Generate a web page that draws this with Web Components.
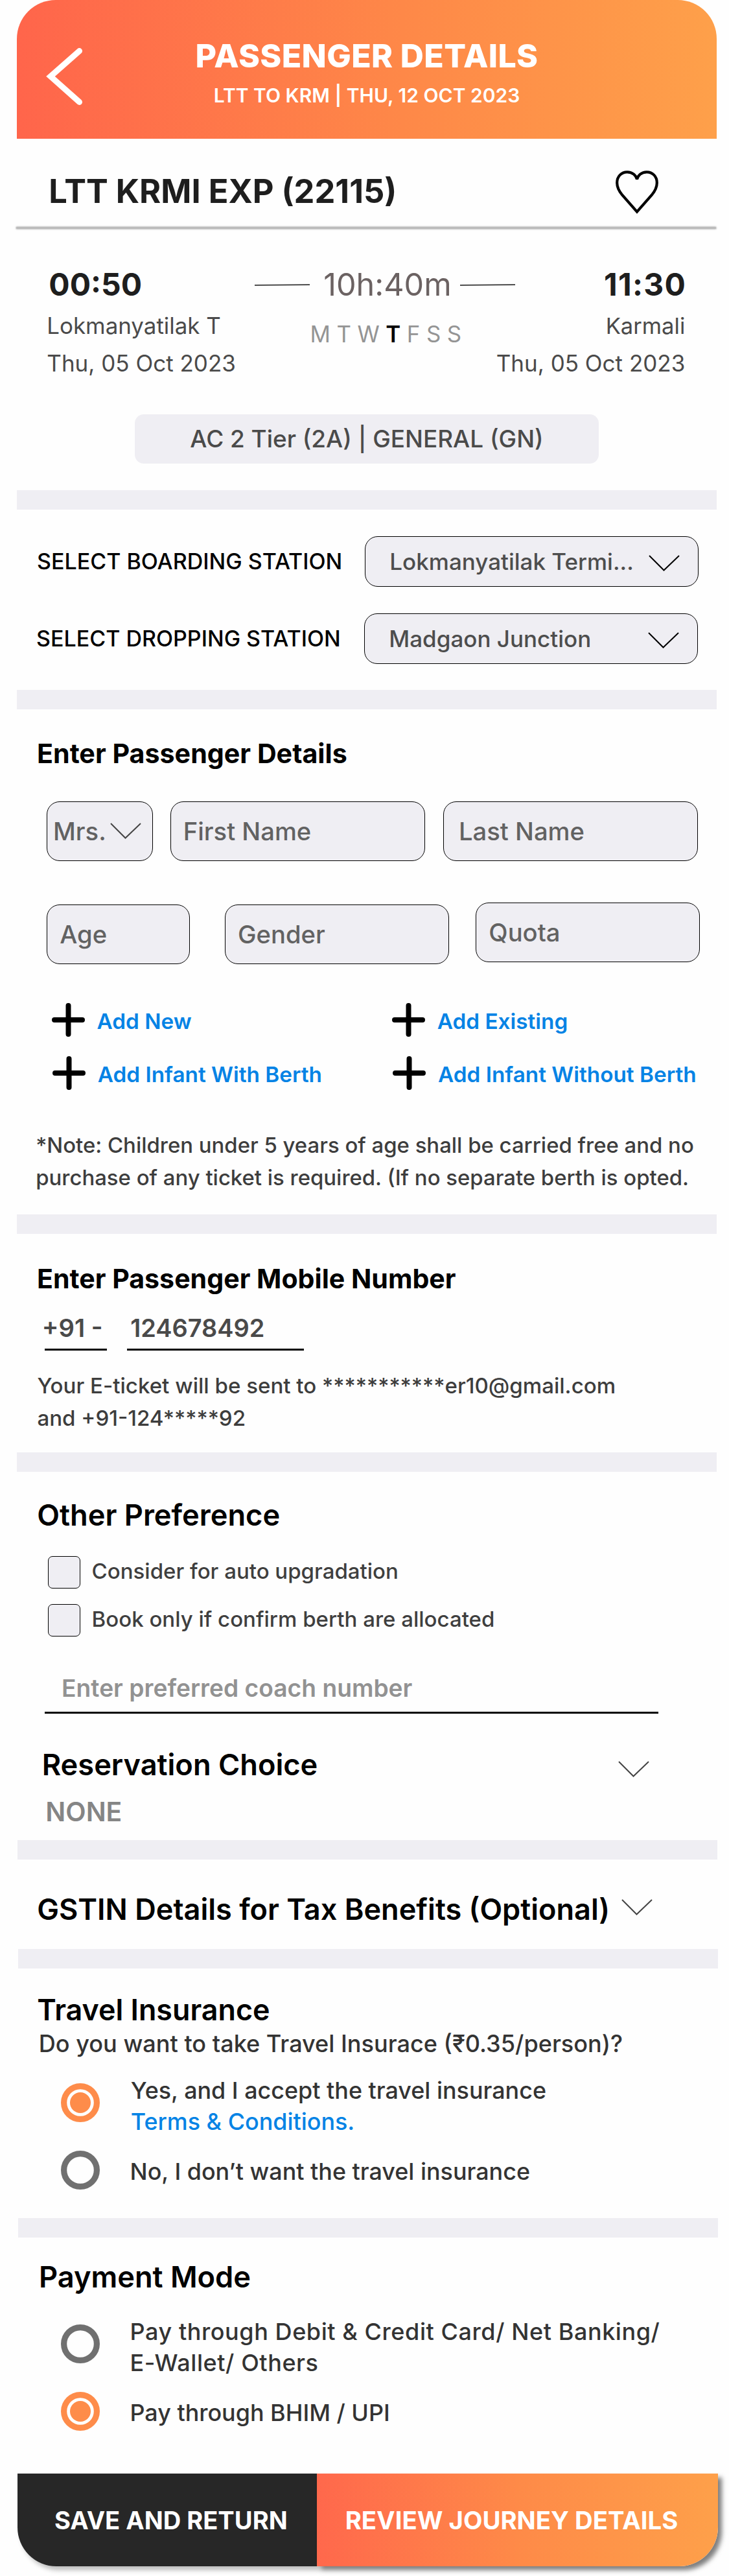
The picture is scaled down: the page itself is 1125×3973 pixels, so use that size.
<!DOCTYPE html>
<html lang="en">
<head>
<meta charset="utf-8">
<title>Passenger Details</title>
<style>
body{margin:0;background:#fefefe;font-family:Inter,"Liberation Sans",sans-serif}
</style>
</head>
<body>
<passenger-page></passenger-page>
<script>
const define = (name, html, setup) => {
  const tpl = document.createElement('template');
  tpl.innerHTML = html;
  customElements.define(name, class extends HTMLElement {
    connectedCallback() {
      if (this.shadowRoot) return;
      this.attachShadow({ mode: 'open' }).append(tpl.content.cloneNode(true));
      if (setup) setup(this, this.shadowRoot);
    }
  });
};

/* Text line: size, weight and tracking come from attributes */
define('text-line', `<style>
  :host{display:block;white-space:nowrap;font-size:var(--s);font-weight:var(--w);letter-spacing:var(--t,0)}
</style><slot></slot>`, (el) => {
  el.style.setProperty('--s', el.getAttribute('size') + 'px');
  el.style.setProperty('--w', el.getAttribute('weight') || 500);
  el.style.setProperty('--t', (el.getAttribute('track') || 0) + 'px');
  el.style.lineHeight = (el.getAttribute('line') || 60) + 'px';
});

define('chevron-icon', `<style>:host{display:block;flex:none;width:48px;height:26px}svg{display:block}</style>
<svg width="48" height="26" viewBox="0 0 48 26" fill="none"><path d="M1 1 23.5 23.5 47 1" stroke="currentColor" stroke-width="2"/></svg>`);

define('app-header', `<style>
  :host{display:grid;grid-template-columns:140px 1fr 140px;width:1080px;height:214px;margin-left:26px;
    border-radius:60px 60px 0 0;background:linear-gradient(90deg,#ff654b,#fe8848 55%,#fea04a);color:#fff;text-align:center}
  svg{margin:74px 0 0 45px}
  .t{padding-top:56px}
  .s{margin-top:11px}
</style>
<svg width="57" height="88" viewBox="0 0 57 88" fill="none"><path d="M51.5 4.6 7 43.8 51.5 83.4" stroke="#fff" stroke-width="9" stroke-linecap="round"/></svg>
<div class="t"><text-line size="50" weight="800" track="0.37"><slot></slot></text-line>
<text-line class="s" size="30" weight="600" line="40"><slot name="sub"></slot></text-line></div>`);

define('page-section', `<style>
  :host{display:block;box-sizing:border-box;height:var(--h)}
  .band{height:30px;width:1080px;margin-left:var(--x,26px);background:#efeef3}
</style><div class="band"></div><slot></slot>`);

define('train-summary', `<style>
  :host{display:block;height:542px}
  .head{display:flex;justify-content:space-between;height:136px;padding:0 109px 0 75.2px;box-sizing:border-box;color:#1e1e1e}
  .head text-line{margin-top:50.6px}
  .head svg{margin-top:49px}
  .rule{height:3px;width:1080px;margin-left:25px;border-radius:2px;background:#bbb;box-shadow:0 0 2px 1px #c8c8c8}
  .trip{display:grid;grid-template-columns:321px 402px 262px;margin:56px 0 0 72.3px;color:#4a4a4a}
  .time{color:#1e1e1e}
  .left .time{margin-left:3px}
  .right{width:302px;margin-left:-40px;text-align:right}
  .right .time{margin-right:-2px}
  .dur{display:flex;align-items:center;color:#6b6262}
  .dur svg{flex:none}
  .dur text-line{margin:0 auto 0 21px}
  .days{margin-left:85.2px;color:#949494}
  b{font-weight:600;color:#000}
  .pill{width:716px;height:76px;margin:54px 0 0 208px;border-radius:14px;background:#efeef3;color:#4a4a4a;text-align:center}
</style>
<div class="head"><text-line size="50.6" weight="700">LTT KRMI EXP (22115)</text-line>
<svg width="66" height="68" viewBox="0 0 66 68" fill="none"><path d="M33 63.6 10.4 38C5 31.5 2.2 26.5 2.2 19 2.2 9 9 2.3 18 2.3 26 2.3 31.5 7.5 33 13.5 34.5 7.5 40 2.3 48 2.3 57 2.3 63.8 9 63.8 19 63.8 26.5 61 31.5 55.6 38Z" stroke="#000" stroke-width="4.2"/></svg></div>
<div class="rule"></div>
<div class="trip">
  <div class="left"><text-line class="time" size="48" weight="700">00:50</text-line><text-line size="34.9" weight="400" line="66">Lokmanyatilak T</text-line><text-line size="35" weight="400" line="50">Thu, 05 Oct 2023</text-line></div>
  <div class="mid"><div class="dur"><svg width="85" height="4"><path d="M0 2.8 85 2.1" stroke="#333" stroke-width="1.7"/></svg><text-line size="48.5" weight="400">10h:40m</text-line><svg width="85" height="4"><path d="M0 2.8 85 2.1" stroke="#333" stroke-width="1.7"/></svg></div>
  <text-line class="days" size="34.8" weight="400" line="92" track="-0.12">M T W <b>T</b> F S S</text-line></div>
  <div class="right"><text-line class="time" size="48" weight="700" track="1.3">11:30</text-line><text-line size="34.6" weight="400" line="66">Karmali</text-line><text-line size="35" weight="400" line="50">Thu, 05 Oct 2023</text-line></div>
</div>
<div class="pill"><text-line size="36.9" weight="500" line="75">AC 2 Tier (2A) | GENERAL (GN)</text-line></div>`);

define('form-field', `<style>
  :host{display:flex;align-items:center;box-sizing:border-box;flex:none;height:92px;border:1px solid #000;border-radius:20px;background:#efeef3;
    color:#626262}
</style><text-line><slot></slot></text-line><slot name="icon"></slot>`, (el, r) => {
  el.style.width = el.getAttribute('width') + 'px';
  el.style.paddingLeft = el.getAttribute('inset') + 'px';
  const t = r.querySelector('text-line');
  t.setAttribute('size', el.getAttribute('size') || 38.2);
  t.style.setProperty('--s', (el.getAttribute('size') || 38.2) + 'px');
});

define('station-row', `<style>
  :host{display:flex;align-items:center;justify-content:space-between;height:78px;width:1021px;margin-left:57px;color:#000}
  form-field{height:78px;color:#4d4d4d}
  chevron-icon{margin:6px 28px 0 auto;color:#000}
</style><text-line size="34" weight="500"><slot></slot></text-line>
<form-field width="515" inset="37.3" size="35"><slot name="value"></slot><chevron-icon slot="icon"></chevron-icon></form-field>`);

define('add-link', `<style>
  :host{display:flex;align-items:center;gap:19px;height:52px;color:#0583e5}
  svg{flex:none}
  text-line{margin-top:4px}
</style><svg width="51" height="52" viewBox="0 0 51 52"><path d="M25.5 4v44M4 26h43" stroke="#000" stroke-width="8" stroke-linecap="round"/></svg>
<text-line size="33.3" weight="600" line="52"><slot></slot></text-line>`);

define('check-option', `<style>
  :host{display:flex;align-items:center;gap:17.6px;height:50px;margin-left:74px;color:#3f3f3f}
  i{box-sizing:border-box;width:50px;height:50px;border:1px solid #000;border-radius:7px;background:#efeef3}
  text-line{margin-top:-4.6px}
</style><i></i><text-line size="33" weight="500" line="50"><slot></slot></text-line>`);

define('radio-option', `<style>
  :host{display:flex;align-items:flex-start;margin-left:94px;color:#333}
  svg{display:block;flex:none;margin-top:var(--r,0)}
  .on{display:none}
  :host([checked]) .on{display:block}
  :host([checked]) .off{display:none}
  div{margin:var(--y,0) 0 0 var(--g,46.5px)}
</style><svg class="off" width="60" height="60"><circle cx="30" cy="30" r="25.4" fill="none" stroke="#707070" stroke-width="9.2"/></svg>
<svg class="on" width="60" height="60"><circle cx="30" cy="30" r="25.4" fill="none" stroke="#fe8c4a" stroke-width="9.2"/><circle cx="30" cy="30" r="16" fill="#fe8c4a"/></svg>
<div><slot></slot></div>`);

define('action-bar', `<style>
  :host{display:flex;width:1081px;height:143px;margin-left:27px;color:#fff}
  div{box-sizing:border-box}
  .a{width:462px;padding-left:56.9px;background:#272727;border-radius:0 0 0 60px;box-shadow:5px 6px 7px rgba(0,0,0,.25)}
  .b{position:relative;width:619px;padding-left:43.7px;background:linear-gradient(90deg,#ff684c,#fe8a48 50%,#fea04a);border-radius:0 0 60px 0;box-shadow:6px 6px 7px rgba(0,0,0,.5)}
</style><div class="a"><text-line size="38.1" weight="700" line="144"><slot name="save"></slot></text-line></div>
<div class="b"><text-line size="38.3" weight="700" line="144"><slot name="review"></slot></text-line></div>`);

define('passenger-page', `<style>
  :host{display:block;width:1125px;height:3973px;overflow:hidden;color:#000}
  .row{display:flex}
  .note{color:#3d3d3d}
  .adds{display:grid;grid-template-columns:525.3px 1fr;row-gap:30px;margin:60px 0 0 79.5px}
  .adds .n{margin-left:1.3px}
  .phone{gap:31px;margin:17.5px 0 0 69px;color:#4a4a4a}
  .phone text-line,.coach{box-sizing:border-box;border-bottom:3.6px solid #000}
  .link{color:#0583e5}
</style>
<app-header>PASSENGER DETAILS<span slot="sub">LTT TO KRM | THU, 12 OCT 2023</span></app-header>
<train-summary></train-summary>

<page-section style="--h:308px">
  <station-row style="margin-top:41px">SELECT BOARDING STATION<span slot="value">Lokmanyatilak Termi...</span></station-row>
  <station-row style="margin-top:41px;margin-left:56px">SELECT DROPPING STATION<span slot="value">Madgaon Junction</span></station-row>
</page-section>

<page-section style="--h:809px">
  <text-line size="41.2" weight="700" style="margin:38px 0 0 57px">Enter Passenger Details</text-line>
  <div class="row" style="margin:44px 0 0 72px">
    <form-field width="164" inset="9">Mrs.<chevron-icon slot="icon" style="margin-left:6px;color:#444"></chevron-icon></form-field>
    <form-field width="393" inset="18.7" style="margin-left:27px">First Name</form-field>
    <form-field width="393" inset="23" style="margin-left:28px">Last Name</form-field>
  </div>
  <div class="row" style="margin:67px 0 0 72px">
    <form-field width="221" inset="19.3">Age</form-field>
    <form-field width="346" inset="19" style="margin-left:54px">Gender</form-field>
    <form-field width="346" inset="19.3" style="margin:-3px 0 0 41px">Quota</form-field>
  </div>
  <div class="adds">
    <add-link>Add New</add-link><add-link>Add Existing</add-link>
    <add-link class="n">Add Infant With Berth</add-link><add-link class="n">Add Infant Without Berth</add-link>
  </div>
  <text-line class="note" size="32.9" line="50" style="margin:60px 0 0 55.2px">*Note: Children under 5 years of age shall be carried free and no<br>purchase of any ticket is required. (If no separate berth is opted.</text-line>
</page-section>

<page-section style="--h:367px">
  <text-line size="41.1" weight="700" style="margin:39px 0 0 57px">Enter Passenger Mobile Number</text-line>
  <div class="row phone">
    <text-line size="38.2" weight="600" line="56" style="width:96px;height:63px;text-indent:-4.2px">+91 -</text-line>
    <text-line size="37.9" weight="600" line="56" style="width:273px;height:63px;text-indent:5.3px">124678492</text-line>
  </div>
  <text-line class="note" size="33.1" line="50" style="margin:29px 0 0 57.4px">Your E-ticket will be sent to ***********er10@gmail.com<br>and +91-124*****92</text-line>
</page-section>

<page-section style="--h:598px">
  <text-line size="45.2" weight="600" style="margin:37px 0 0 57.3px">Other Preference</text-line>
  <check-option style="margin-top:33px">Consider for auto upgradation</check-option>
  <check-option style="margin-top:24px">Book only if confirm berth are allocated</check-option>
  <text-line class="coach" size="37.2" weight="600" style="margin:50px 0 0 68.5px;width:947px;height:68.5px;text-indent:26.6px;color:#929292;border-color:#000">Enter preferred coach number</text-line>
  <div class="row" style="margin:49px 0 0 64.7px"><text-line size="45.2" weight="600" style="width:889px">Reservation Choice</text-line><chevron-icon style="margin-top:24px;color:#444"></chevron-icon></div>
  <text-line size="40.8" weight="600" style="margin:12px 0 0 70.3px;color:#858585">NONE</text-line>
</page-section>

<page-section style="--h:168px;--x:27px">
  <div class="row" style="margin:46.6px 0 0 57.2px"><text-line size="45.1" weight="600" style="width:901.5px">GSTIN Details for Tax Benefits (Optional)</text-line><chevron-icon style="margin-top:14px;color:#444"></chevron-icon></div>
</page-section>

<page-section style="--h:415px;--x:28px">
  <text-line size="44.8" weight="600" style="margin:33.6px 0 0 57.2px">Travel Insurance</text-line>
  <text-line size="36.1" line="45" style="margin-left:59.8px;color:#333">Do you want to take Travel Insurace (₹0.35/person)?</text-line>
  <radio-option checked style="margin-top:25.4px;--r:13px;--g:47.8px"><text-line size="35.9" line="48">Yes, and I accept the travel insurance</text-line><text-line class="link" size="35.9" line="48">Terms &amp; Conditions.</text-line></radio-option>
  <radio-option style="margin-top:21px;--y:8px"><text-line size="35.9" line="48">No, I don’t want the travel insurance</text-line></radio-option>
</page-section>

<page-section style="--h:394px;--x:28px">
  <text-line size="45.2" weight="600" style="margin:30.6px 0 0 60px">Payment Mode</text-line>
  <radio-option style="margin-top:30px;--r:13.4px"><text-line size="36" line="48" track="0.57">Pay through Debit &amp; Credit Card/ Net Banking/<br>E-Wallet/ Others</text-line></radio-option>
  <radio-option checked style="margin-top:21.4px;--y:8px"><text-line size="35.9" line="48">Pay through BHIM / UPI</text-line></radio-option>
</page-section>
<action-bar><span slot="save">SAVE AND RETURN</span><span slot="review">REVIEW JOURNEY DETAILS</span></action-bar>`);
</script>
</body>
</html>
